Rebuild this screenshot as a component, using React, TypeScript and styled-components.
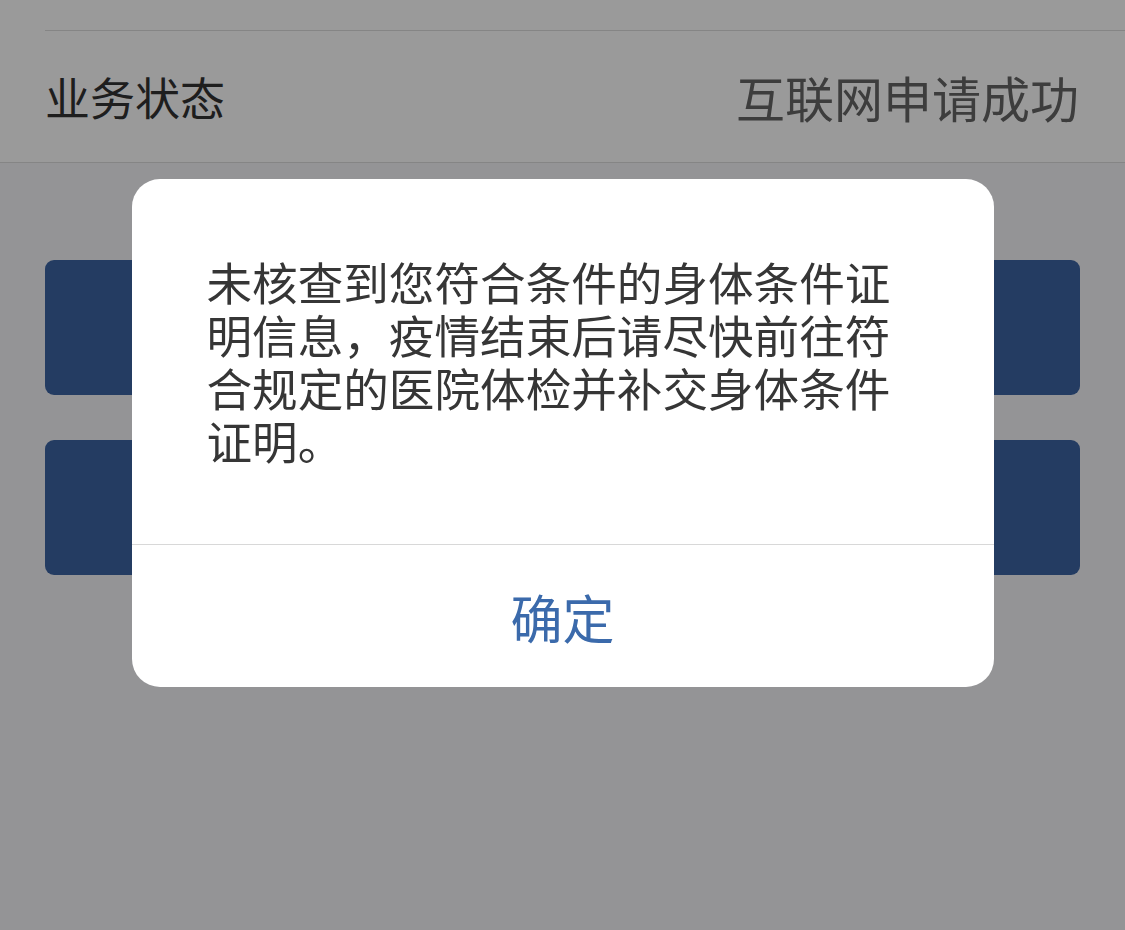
import React from "react";
import styled, { createGlobalStyle } from "styled-components";

const GlobalStyle = createGlobalStyle`
  html, body {
    margin: 0;
    padding: 0;
    background: #f5f5f9;
    font-family: "Noto Sans CJK SC", "Noto Sans", sans-serif;
  }
  * { box-sizing: border-box; }
`;

const Page = styled.div`
  width: 1125px;
  min-height: 930px;
  background: #f5f5f9;
  display: flex;
  flex-direction: column;
`;

const InfoList = styled.div`
  background: #ffffff;
  border-bottom: 1px solid #dcdcdc;
  display: flex;
  flex-direction: column;
`;

const Row = styled.div<{ $height: number; $divider?: boolean }>`
  height: ${(p) => p.$height}px;
  margin-left: 45px;
  padding-right: 46px;
  display: flex;
  align-items: center;
  justify-content: space-between;
  border-bottom: ${(p) => (p.$divider ? "1px solid #dcdcdc" : "none")};
`;

const Label = styled.span`
  font-size: 45px;
  color: #333333;
  line-height: 1;
`;

const Value = styled.span`
  font-size: 49px;
  color: #666666;
  line-height: 1;
`;

const Actions = styled.div`
  margin-top: 97px;
  padding: 0 45px;
  display: flex;
  flex-direction: column;
  gap: 45px;
`;

const ActionButton = styled.button`
  height: 135px;
  border: none;
  border-radius: 9px;
  background: #3c64a3;
  color: #ffffff;
  font-family: inherit;
  font-size: 44px;
`;

const Mask = styled.div`
  position: fixed;
  inset: 0;
  background: rgba(0, 0, 0, 0.396);
  display: flex;
  justify-content: center;
  align-items: flex-start;
  padding-top: 179px;
`;

const Dialog = styled.div`
  width: 862px;
  background: #ffffff;
  border-radius: 28px;
  display: flex;
  flex-direction: column;
  overflow: hidden;
`;

const DialogBody = styled.div`
  padding: 76px 77px 77px 75px;
  font-size: 45.6px;
  line-height: 53px;
  color: #363636;
`;

const DialogFooter = styled.div`
  border-top: 1px solid #d8d8d8;
  height: 143px;
  display: flex;
  align-items: center;
  justify-content: center;
`;

const ConfirmButton = styled.button`
  border: none;
  background: transparent;
  font-family: inherit;
  font-size: 52px;
  line-height: 1;
  color: #3b6aab;
  padding: 0;
  margin-top: 2px;
`;

export default function App() {
  return (
    <>
      <GlobalStyle />
      <Page>
        <InfoList>
          <Row $height={31} $divider />
          <Row $height={131}>
            <Label>业务状态</Label>
            <Value>互联网申请成功</Value>
          </Row>
        </InfoList>
        <Actions>
          <ActionButton />
          <ActionButton />
        </Actions>
      </Page>
      <Mask>
        <Dialog>
          <DialogBody>
            未核查到您符合条件的身体条件证明信息，疫情结束后请尽快前往符合规定的医院体检并补交身体条件证明。
          </DialogBody>
          <DialogFooter>
            <ConfirmButton>确定</ConfirmButton>
          </DialogFooter>
        </Dialog>
      </Mask>
    </>
  );
}
